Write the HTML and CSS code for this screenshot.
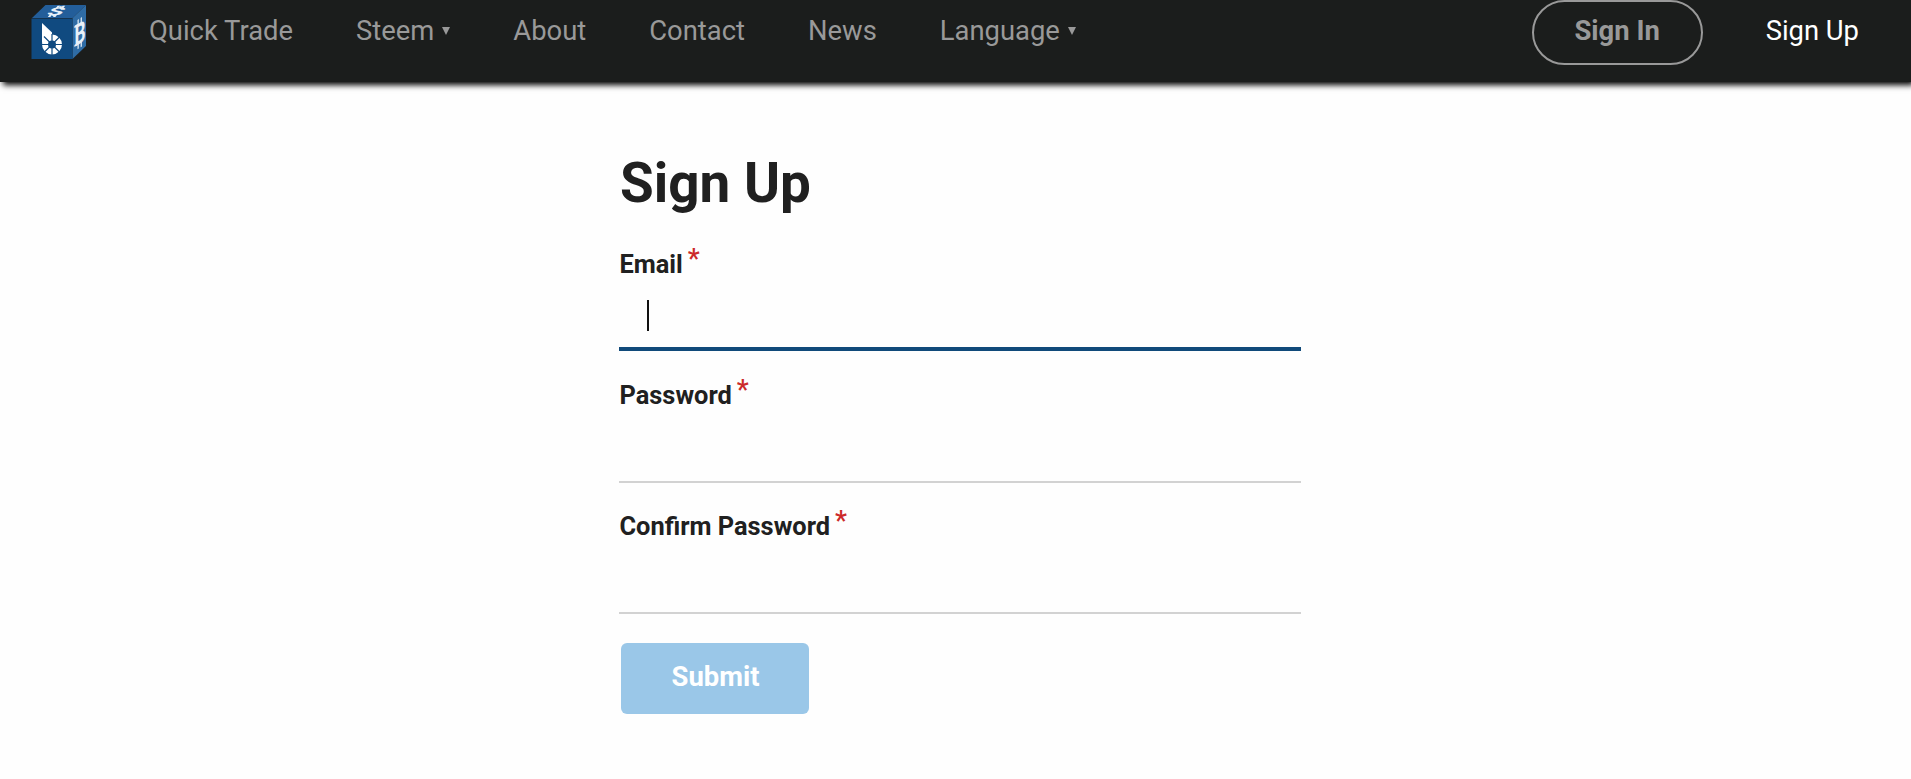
FILE: index.html
```
<!DOCTYPE html>
<html lang="en">
<head>
    <meta charset="UTF-8">
    <meta name="viewport" content="width=device-width, initial-scale=1.0">
    <title>Sign Up</title>
    <link rel="stylesheet" href="styles.css">
</head>
<body>
    <header class="navbar">
        <a class="logo" href="#">
            <svg width="56" height="56" viewBox="31 4 56 56">
                <polygon points="32,18 45.5,5 86,5 72.5,18" fill="#235e9a"/>
                <polygon points="72.5,18 86,5 86,46 72.5,59" fill="#2f6ca5"/>
                <rect x="31.5" y="18.5" width="41" height="40.5" fill="#104a80"/>
                <!-- front: pie wheel -->
                <path d="M42 23 L52 32.5 V37 L42 43 Z" fill="#fff"/>
                <circle cx="52" cy="44.5" r="7" fill="none" stroke="#fff" stroke-width="6"/>
                <path d="M41 44.5 H63 M52 34 V56 M44 36.5 L60 52.5 M60 36.5 L44 52.5" stroke="#104a80" stroke-width="1.2"/>
                <!-- top: dollar -->
                <g transform="matrix(2.1 0 -.6 .75 56.5 11.3)">
                    <text class="mark" x="0" y="5" font-size="14" text-anchor="middle">$</text>
                    <path d="M-1 -7.5 V-4.5 M1.4 -7.5 V-4.5 M-1.4 4.5 V7.5 M1 4.5 V7.5" class="mark-line thin"/>
                </g>
                <!-- side: bitcoin -->
                <g transform="matrix(.62 -.4 0 1.05 80 33)">
                    <text class="mark" x="0" y="10" font-size="28" text-anchor="middle">B</text>
                    <path d="M-9 -9 H-4 M-9 9 H-4 M-3 -14 V-9 M2 -14 V-9 M-3 9 V14 M2 9 V14" class="mark-line"/>
                </g>
            </svg>
        </a>
        <nav class="menu">
            <a href="#">Quick Trade</a>
            <a href="#">Steem<span class="arrow"></span></a>
            <a href="#">About</a>
            <a href="#">Contact</a>
            <a href="#">News</a>
            <a href="#">Language<span class="arrow"></span></a>
        </nav>
        <div class="account">
            <a class="sign-in" href="#">Sign In</a>
            <a class="sign-up" href="#">Sign Up</a>
        </div>
    </header>

    <form class="signup-form">
        <h1>Sign Up</h1>
        <label>Email<span class="required">*</span></label>
        <div class="field field-active"><span class="caret"></span></div>
        <label>Password<span class="required">*</span></label>
        <div class="field"></div>
        <label>Confirm Password<span class="required">*</span></label>
        <div class="field"></div>
        <button class="submit" type="button">Submit</button>
    </form>
</body>
</html>
```
FILE: styles.css
```
* {
    box-sizing: border-box;
}

body {
    margin: 0;
    background: #fefefe;
    color: #202020;
    font-family: Roboto, sans-serif;
    overflow: hidden;
}

.navbar {
    display: flex;
    height: 82px;
    padding-left: 31px;
    padding-right: 52px;
    background: #1b1d1c;
    box-shadow: 3px 3px 6px #000;
    font-size: 27.4px;
    line-height: 62px;
}

.navbar a {
    color: #999;
    text-decoration: none;
    white-space: nowrap;
}

.logo {
    width: 56px;
    height: 56px;
    margin-top: 4px;
    line-height: 0;
}

.mark {
    fill: #e8f0f8;
    font-weight: bold;
}

.mark-line {
    fill: none;
    stroke: #e8f0f8;
    stroke-width: 2;
}

.thin {
    stroke-width: 1.2;
}

.menu {
    display: flex;
    gap: 63px;
    margin-left: 62px;
}

.arrow {
    display: inline-block;
    margin-left: 8px;
    vertical-align: 5px;
    border: 4px solid transparent;
    border-top: 8px solid #999;
    border-bottom: 0;
}

.account {
    display: flex;
    align-items: flex-start;
    gap: 63px;
    margin-left: auto;
}

.navbar .sign-in {
    width: 171px;
    height: 65px;
    border: 2px solid #999;
    border-radius: 33px;
    font-weight: bold;
    line-height: 58px;
    text-align: center;
}

.navbar .sign-up {
    color: #fff;
}

.signup-form {
    width: 682px;
    margin-left: 619px;
    padding-top: 68px;
}

h1 {
    margin: 0 0 33px 1px;
    font-size: 54.8px;
    line-height: 66px;
}

label {
    display: block;
    height: 49px;
    padding-left: 0.5px;
    font-size: 25.4px;
    font-weight: bold;
    line-height: 30px;
}

.required {
    position: relative;
    top: -5px;
    margin-left: 5px;
    color: #cc2a2a;
    font-size: 27px;
    font-weight: 500;
    line-height: 0;
}

.field {
    height: 54px;
    margin-bottom: 28px;
    padding: 2px 28px;
    border-bottom: 2px solid #d2d2d2;
}

.field-active {
    height: 53px;
    margin-bottom: 29px;
    border-bottom: 4px solid #104a7a;
}

.caret {
    display: block;
    width: 2px;
    height: 31px;
    background: #111;
}

.submit {
    width: 188px;
    height: 71px;
    margin-top: 1px;
    margin-left: 2px;
    padding-left: 7px;
    padding-bottom: 4px;
    border: 0;
    border-radius: 6px;
    background: #9ac7e8;
    color: #fff;
    font: bold 27.4px Roboto, sans-serif;
}
```
